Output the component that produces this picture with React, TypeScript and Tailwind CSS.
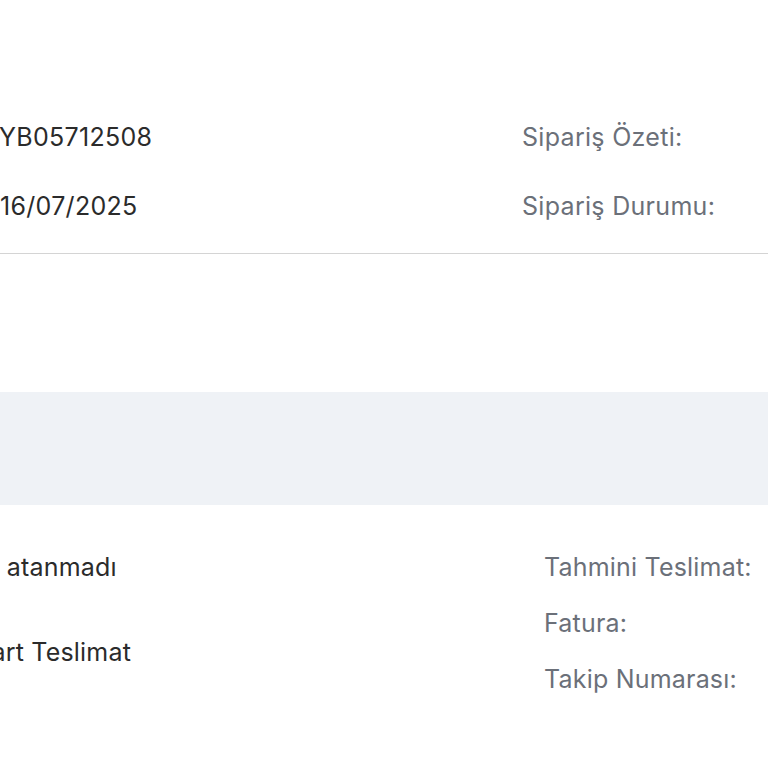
import React from "react";

export default function App() {
  return (
    <div
      className="w-[768px] h-[768px] overflow-hidden bg-white"
      style={{ fontFamily: "Inter, 'Noto Sans', sans-serif" }}
    >
      {/* Top summary */}
      <div className="border-b border-[#d4d4d4] pt-[123px] pb-[33px]">
        <div className="flex flex-col gap-[41px] text-[25px] leading-[28px] tracking-[0.3px]">
          <div className="flex">
            <span className="w-[522px] shrink-0 text-[#2b2b2b] -ml-[1px]">YB05712508</span>
            <span className="text-[#6b7079] ml-[1px]">Sipariş Özeti:</span>
          </div>
          <div className="flex">
            <span className="w-[522px] shrink-0 text-[#2b2b2b] ml-[0px]">16/07/2025</span>
            <span className="text-[#6b7079]">Sipariş Durumu:</span>
          </div>
        </div>
      </div>

      {/* Spacer + gray band */}
      <div className="h-[138px]" />
      <div className="h-[113px] bg-[#eff2f6]" />

      {/* Bottom details */}
      <div className="flex pt-[48px] text-[25px] leading-[28px] tracking-[0.2px]">
        <div className="w-[622px] shrink-0 -ml-[78px] flex flex-col gap-[57px] text-[#2b2b2b]">
          <span>Henüz atanmadı</span>
          <span>Standart Teslimat</span>
        </div>
        <div className="flex flex-col gap-[28px] text-[#6b7079]">
          <span>Tahmini Teslimat:</span>
          <span>Fatura:</span>
          <span>Takip Numarası:</span>
        </div>
      </div>
    </div>
  );
}
